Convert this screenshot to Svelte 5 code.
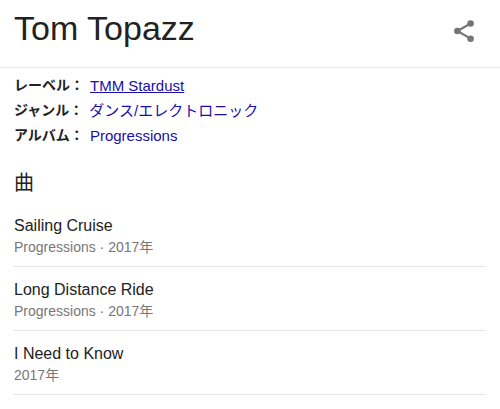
<script lang="ts">
	const facts = [
		{ label: 'レーベル', value: 'TMM Stardust', underlined: true },
		{ label: 'ジャンル', value: 'ダンス/エレクトロニック' },
		{ label: 'アルバム', value: 'Progressions' }
	];

	const songs = [
		{ title: 'Sailing Cruise', detail: 'Progressions · 2017年' },
		{ title: 'Long Distance Ride', detail: 'Progressions · 2017年' },
		{ title: 'I Need to Know', detail: '2017年' }
	];
</script>

<article class="panel">
	<header class="panel-header">
		<h1>Tom Topazz</h1>
		<button class="share-button" type="button" aria-label="共有">
			<svg viewBox="0 0 20 22" width="20" height="22" aria-hidden="true">
				<path d="M16.6 3.5L3.4 11l13.2 7.7" fill="none" stroke="currentColor" stroke-width="2.1" />
				<g fill="currentColor">
					<circle cx="16.6" cy="3.5" r="3.3" />
					<circle cx="3.4" cy="11" r="3.3" />
					<circle cx="16.6" cy="18.7" r="3.3" />
				</g>
			</svg>
		</button>
	</header>

	<section class="facts">
		{#each facts as fact}
			<div class="fact">
				<span class="label">{fact.label}：</span>
				<a href="#top" class:underlined={fact.underlined}>{fact.value}</a>
			</div>
		{/each}
	</section>

	<section class="songs">
		<h2>曲</h2>
		<ul>
			{#each songs as song}
				<li>
					<div class="title">{song.title}</div>
					<div class="detail">{song.detail}</div>
				</li>
			{/each}
		</ul>
	</section>
</article>

<style>
	:global(body) {
		background: #fff;
	}

	.panel {
		font-family: 'Liberation Sans', 'Noto Sans CJK JP', sans-serif;
		font-size: 14px;
		color: #222;
	}

	.panel-header {
		display: flex;
		align-items: flex-start;
		justify-content: space-between;
		padding: 8px 26px 19px 14px;
		border-bottom: 1px solid #e8e8e8;
	}

	h1 {
		margin: 0;
		font-size: 34px;
		font-weight: 400;
		line-height: 40px;
	}

	.share-button {
		display: flex;
		margin: 12px 0 0;
		padding: 0;
		border: 0;
		background: none;
		color: #757575;
		cursor: pointer;
	}

	.facts {
		padding: 5px 14px 0;
	}

	.fact {
		display: flex;
		gap: 6px;
		line-height: 25px;
	}

	.label {
		font-weight: 700;
	}

	a {
		font-size: 15px;
		color: #1a0dab;
		text-decoration: none;
	}

	a:hover,
	a.underlined {
		text-decoration: underline;
	}

	.songs {
		padding: 20px 14px 0;
	}

	h2 {
		margin: 0;
		font-size: 20px;
		font-weight: 400;
		line-height: 30px;
	}

	ul {
		margin: 0;
		padding: 5px 0 0;
		list-style: none;
	}

	li {
		padding: 13px 0 7px;
		border-bottom: 1px solid #e5e5e5;
	}

	.title {
		font-size: 16px;
		line-height: 20px;
	}

	.detail {
		line-height: 23px;
		color: #777;
	}
</style>
